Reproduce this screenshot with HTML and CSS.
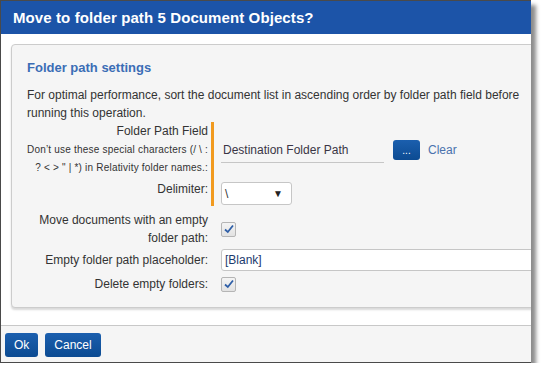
FILE: index.html
```html
<!DOCTYPE html>
<html>
<head>
  <meta charset="UTF-8">
  <title>Move to folder path</title>
  <link rel="stylesheet" href="styles.css">
</head>
<body>
  <div class="dialog">
    <div class="title">Move to folder path 5 Document Objects?</div>

    <div class="content">
      <div class="panel">
        <h3>Folder path settings</h3>
        <p class="hint">For optimal performance, sort the document list in ascending order by folder path field before running this operation.</p>

        <!-- Folder path group -->
        <div class="group">
          <div class="group-labels">
            <div class="label">Folder Path Field</div>
            <div class="note">Don’t use these special characters (/ \ :<br>? &lt; &gt; " | *) in Relativity folder names.:</div>
            <div class="label delim">Delimiter:</div>
          </div>
          <div class="group-fields">
            <div class="path-row">
              <div class="path-value">Destination Folder Path</div>
              <button class="btn small">...</button>
              <a class="clear">Clear</a>
            </div>
            <div class="select">
              <span>\</span>
              <span class="caret">&#9660;</span>
            </div>
          </div>
        </div>

        <div class="row tall">
          <div class="label">Move documents with an empty<br>folder path:</div>
          <span class="check">
            <svg width="12" height="12" viewBox="0 0 12 12"><path d="M2 6.5 L4.8 9 L10 2.5" fill="none" stroke="#2f5fa7" stroke-width="1.8"/></svg>
          </span>
        </div>

        <div class="row mid">
          <div class="label">Empty folder path placeholder:</div>
          <div class="text-input">[Blank]</div>
        </div>

        <div class="row">
          <div class="label">Delete empty folders:</div>
          <span class="check">
            <svg width="12" height="12" viewBox="0 0 12 12"><path d="M2 6.5 L4.8 9 L10 2.5" fill="none" stroke="#2f5fa7" stroke-width="1.8"/></svg>
          </span>
        </div>
      </div>
    </div>

    <div class="footer">
      <button class="btn">Ok</button>
      <button class="btn">Cancel</button>
    </div>
  </div>
</body>
</html>
```

FILE: styles.css
```css
body {
  margin: 0;
  background: #fff;
  font-family: Arial, "Liberation Sans", sans-serif;
  color: #333;
}
.dialog {
  width: 530px;
  border: 1px solid #4a4a4a;
  border-right: 0;
  overflow: hidden;
  box-shadow: 5px 5px 4px rgba(0, 0, 0, 0.45);
}
.title {
  height: 33px;
  line-height: 33px;
  padding-left: 12px;
  background: #1c54a8;
  color: #fff;
  font-size: 15px;
  font-weight: bold;
  letter-spacing: 0.1px;
}
.content {
  background: #fff;
  padding: 10px 0 17px 10px;
  border-bottom: 1px solid #c8c8c8;
}
.panel {
  width: 560px;
  height: 248px;
  padding: 14px 15px 0 15px;
  background: #f5f5f5;
  border: 1px solid #ccc;
  border-radius: 4px;
  box-shadow: 0 2px 2px rgba(0, 0, 0, 0.15);
}
h3 {
  margin: 0 0 9px;
  font-size: 13px;
  line-height: 18px;
  color: #3b6db5;
}
.hint {
  width: 510px;
  margin: 0;
  font-size: 12px;
  line-height: 18px;
}
.group {
  display: flex;
  gap: 3px;
}
.group-labels {
  width: 181px;
  text-align: right;
}
.label {
  font-size: 12px;
  line-height: 19px;
  white-space: nowrap;
}
.note {
  font-size: 10px;
  line-height: 18px;
  white-space: nowrap;
  letter-spacing: 0.2px;
}
.delim {
  padding-top: 3px;
}
.group-fields {
  border-left: 3px solid #f19a1f;
  padding-left: 7px;
  padding-bottom: 1px;
}
.path-row {
  height: 56px;
  display: flex;
  align-items: center;
}
.path-value {
  width: 161px;
  height: 24px;
  line-height: 24px;
  padding-left: 2px;
  border-bottom: 1px solid #c6c6c6;
  font-size: 12px;
  color: #3a3545;
}
.btn {
  height: 24px;
  padding: 0 9px;
  border: 0;
  border-radius: 3px;
  background: linear-gradient(#1b5fae, #0c4b92);
  color: #fff;
  font-family: inherit;
  font-size: 12px;
}
.btn.small {
  height: 20px;
  width: 27px;
  padding: 0;
  margin-left: 9px;
  font-size: 10px;
}
.clear {
  margin-left: 8px;
  font-size: 12px;
  color: #4a72ad;
}
.select {
  width: 66px;
  height: 21px;
  margin-top: 4px;
  display: flex;
  align-items: center;
  justify-content: space-between;
  padding: 0 0 0 3px;
  background: #fff;
  border: 1px solid #c6c6c6;
  border-radius: 3px;
  font-size: 12px;
}
.caret {
  font-size: 10px;
  margin-right: 8px;
  color: #222;
}
.row {
  display: grid;
  grid-template-columns: 181px auto;
  column-gap: 13px;
  align-items: center;
  justify-items: start;
  margin-top: 4px;
}
.row .label {
  justify-self: end;
  text-align: right;
  line-height: 18px;
}
.row.tall {
  margin-top: 5px;
}
.row.mid {
  margin-top: 2px;
}
.check {
  width: 13px;
  height: 13px;
  display: flex;
  align-items: center;
  justify-content: center;
  border: 1px solid #b5b5b5;
  border-radius: 2px;
  background: linear-gradient(#f4f4f4, #e2e2e2);
}
.text-input {
  width: 330px;
  height: 20px;
  line-height: 20px;
  padding-left: 3px;
  background: #fff;
  border: 1px solid #c6c6c6;
  border-radius: 3px;
  font-size: 12px;
  color: #1c3a6e;
}
.footer {
  background: #f5f5f5;
  padding: 7px 4px 5px;
  display: flex;
  gap: 7px;
}
```
